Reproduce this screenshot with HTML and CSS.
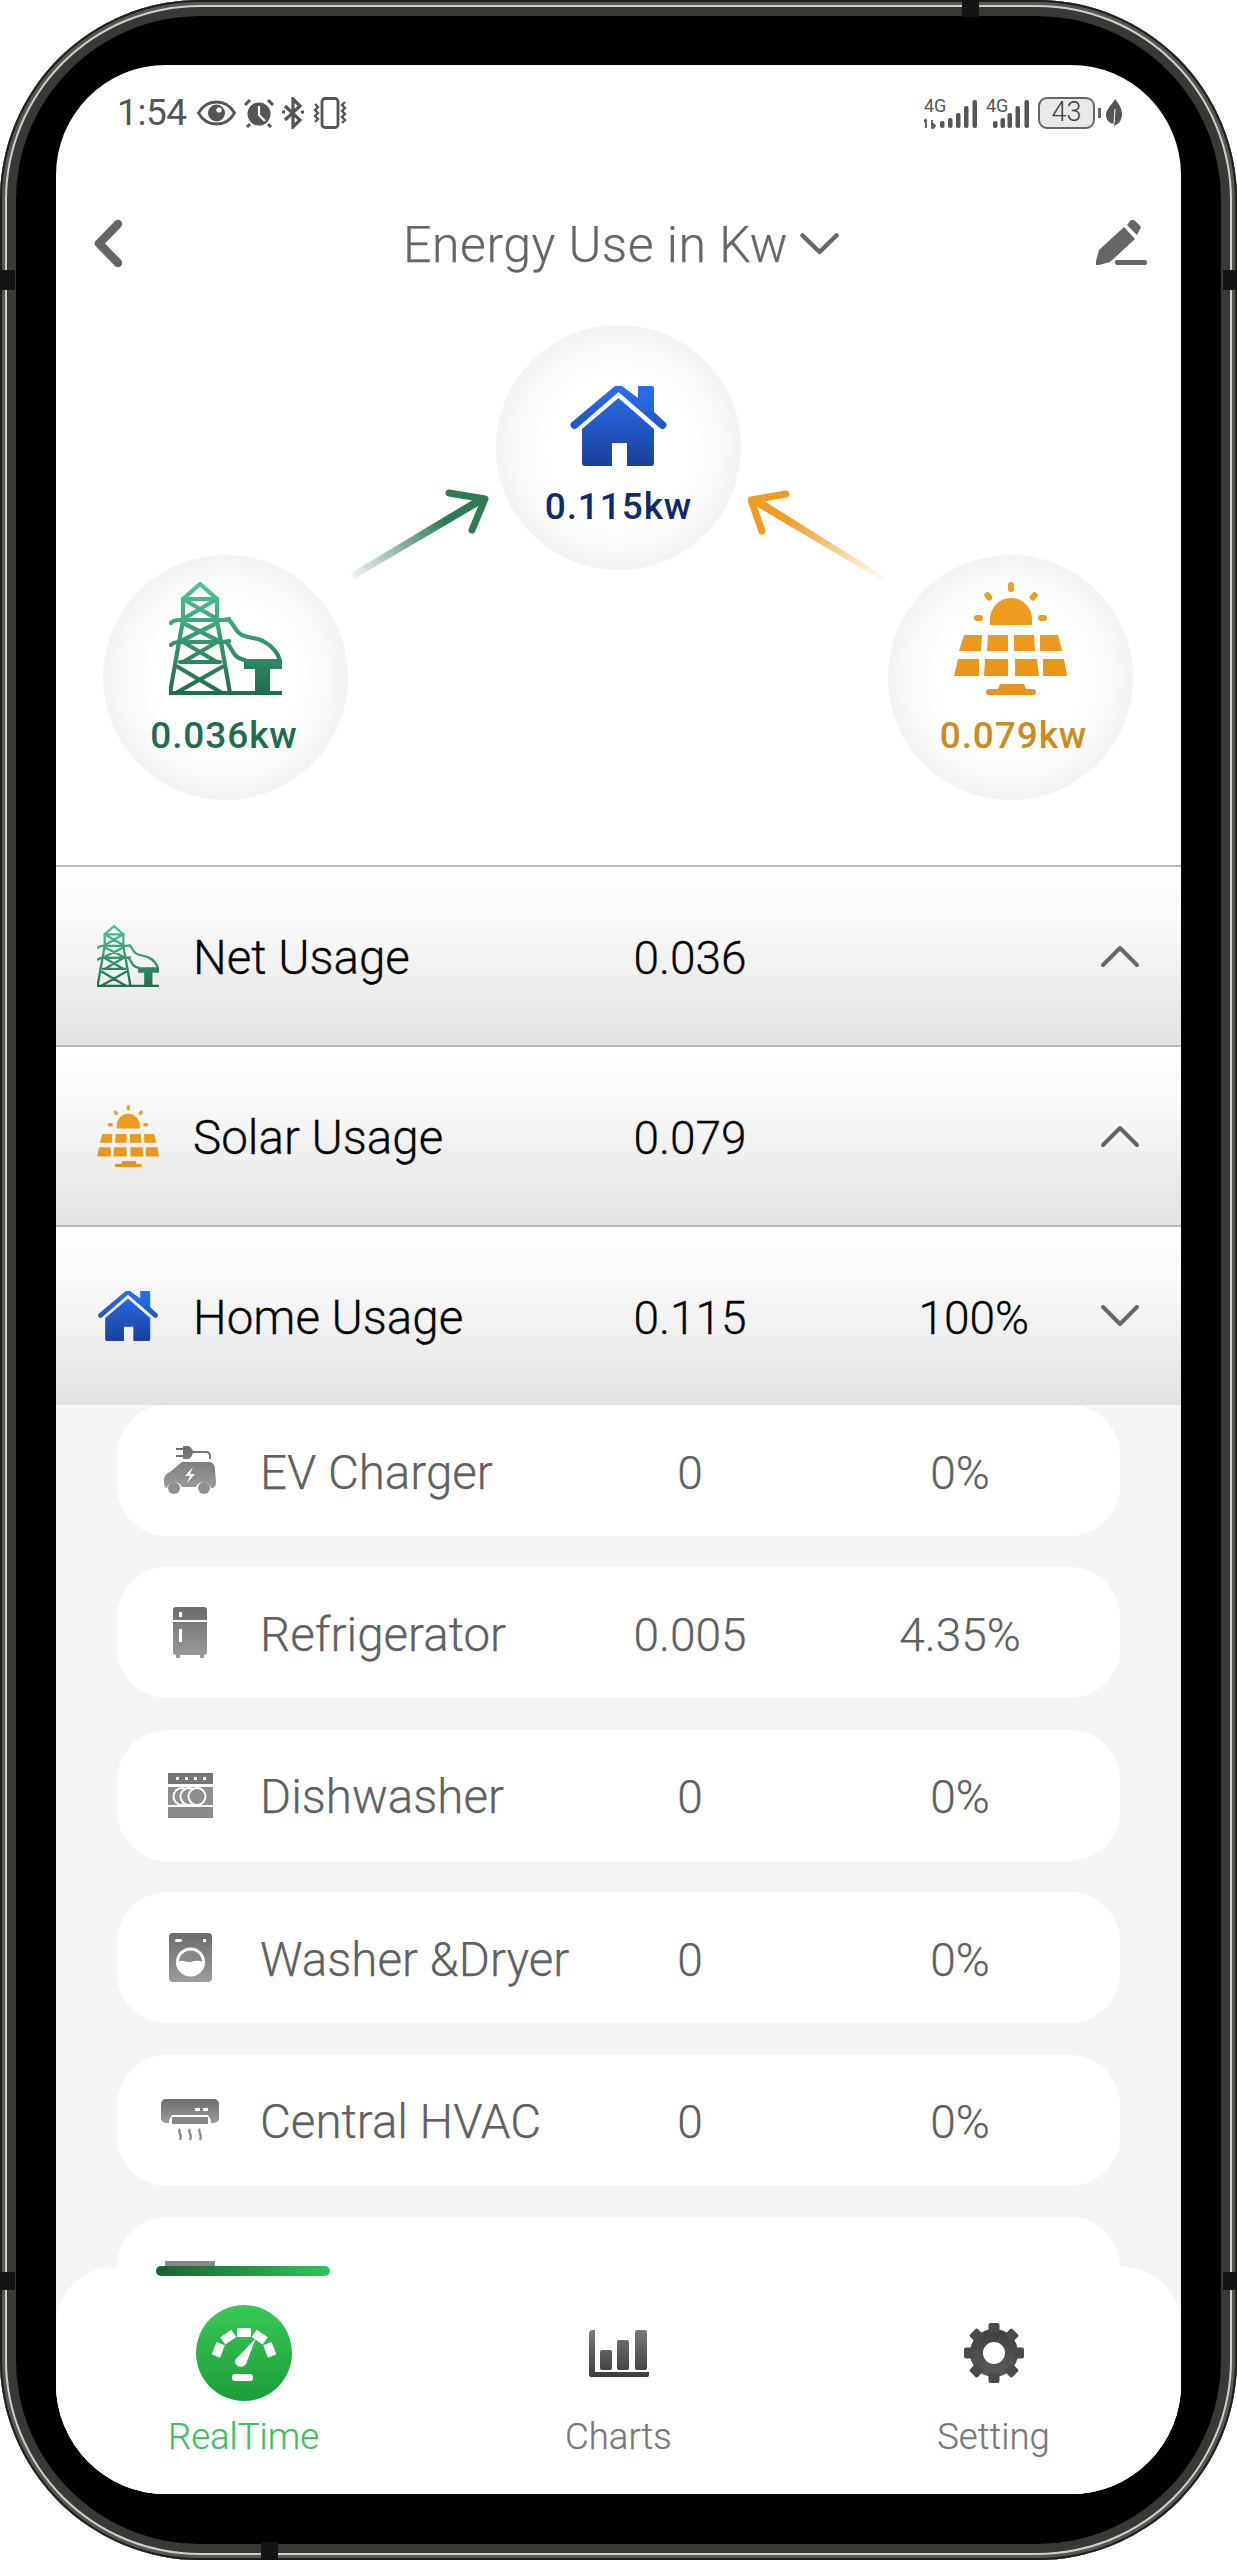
FILE: index.html
```html
<!DOCTYPE html>
<html lang="en">
<head>
<meta charset="utf-8">
<title>Energy Use</title>
<link rel="stylesheet" href="styles.css">
</head>
<body>
<svg class="defs" width="0" height="0" aria-hidden="true">
  <defs>
    <linearGradient id="gTower" gradientUnits="userSpaceOnUse" x1="0" y1="0" x2="0" y2="113"><stop offset="0" stop-color="#4fc596"/><stop offset="1" stop-color="#226b4c"/></linearGradient>
    <linearGradient id="gSolar" gradientUnits="userSpaceOnUse" x1="0" y1="0" x2="0" y2="113"><stop offset="0" stop-color="#ef9f22"/><stop offset="1" stop-color="#e8941c"/></linearGradient>
    <linearGradient id="gHome" gradientUnits="userSpaceOnUse" x1="0" y1="0" x2="0" y2="80"><stop offset="0" stop-color="#2870ee"/><stop offset="1" stop-color="#1a4099"/></linearGradient>
    <linearGradient id="gGray" x1="0" y1="0" x2="0" y2="1"><stop offset="0" stop-color="#6c6c6c"/><stop offset="1" stop-color="#9c9c9c"/></linearGradient>
    <linearGradient id="gDark" gradientUnits="userSpaceOnUse" x1="0" y1="0" x2="0" y2="60"><stop offset="0" stop-color="#3c3c3c"/><stop offset="1" stop-color="#5e5e5e"/></linearGradient>
    <linearGradient id="gChart" gradientUnits="userSpaceOnUse" x1="0" y1="0" x2="0" y2="47"><stop offset="0" stop-color="#7a7a7a"/><stop offset="1" stop-color="#3c3c3c"/></linearGradient>
    <linearGradient id="gGauge" x1="0" y1="0" x2="0" y2="1"><stop offset="0" stop-color="#38c855"/><stop offset="1" stop-color="#1d9e39"/></linearGradient>
    <linearGradient id="gArrowG" gradientUnits="userSpaceOnUse" x1="0" y1="85" x2="134" y2="8"><stop offset="0" stop-color="#2f7a57" stop-opacity=".08"/><stop offset=".7" stop-color="#2f7a57"/></linearGradient>
    <linearGradient id="gArrowO" gradientUnits="userSpaceOnUse" x1="130" y1="83" x2="0" y2="8"><stop offset="0" stop-color="#ee9c22" stop-opacity=".08"/><stop offset=".7" stop-color="#ee9c22"/></linearGradient>
    <symbol id="i-tower" viewBox="0 0 113 113">
      <g fill="none" stroke="url(#gTower)" stroke-width="4.200" stroke-linejoin="round" stroke-linecap="round">
        <path d="M31 2 14 17v22l-4 21-9 51M31 2l17 15v22l4 21 9 51"/>
        <path d="M14 17h34M14 17l34 20M48 17 14 37M14 41l34 17M48 41 14 58M14 60l34 20M48 60 14 80M14 60h38M11 80h40M9 85l44 26M53 85 7 111"/>
        <path d="M2 41c2-3 6-3 9-3h41c3 0 6 0 8-1M2 63c2-3 6-3 9-3h41c3 0 6 0 8-1"/>
        <path d="M60 38c4 3 5 9 10 13 5 5 16 4 24 8 9 5 15 11 17 20M58 61c4 4 5 9 9 13 3 3 5 3 9 4"/>
      </g>
      <path fill="url(#gTower)" d="M75 77h38v10H101v22H86V87H75zM0 109h113v4H0z"/>
    </symbol>
    <symbol id="i-solar" viewBox="0 0 113 113">
      <g fill="url(#gSolar)">
        <path d="M36 43V37a21 21 0 0 1 42 0v6z"/>
        <rect x="54" y="0" width="6" height="10" rx="3"/>
        <rect x="31" y="10" width="6" height="9" rx="3" transform="rotate(-40 34 14)"/>
        <rect x="77" y="10" width="6" height="9" rx="3" transform="rotate(40 80 14)"/>
        <rect x="20" y="33" width="9" height="6" rx="3"/>
        <rect x="84" y="33" width="9" height="6" rx="3"/>
        <path d="M10 53h18l-1 16H5zM34 53h20v16H33zM60 53h20l1 16H60zM86 53h18l4 16H86zM4 77h21v17H0zM31 77h23v17H30zM61 77h22l2 17H61zM89 77h21l3 17H89z"/>
        <path d="M44 107l2-5h24l2 5h7a3 3 0 0 1 0 6H35a3 3 0 0 1 0-6z"/>
      </g>
    </symbol>
    <symbol id="i-home" viewBox="0 0 99 80">
      <path fill="url(#gHome)" d="M69 0h14a2 2 0 0 1 2 2v24l11 10a3.500 3.500 0 0 1-5 6L49.500 6 8 42a3.500 3.500 0 0 1-5-6L46 0h7l16 12z"/>
      <path fill="url(#gHome)" d="M49.500 12 85 43v34a3 3 0 0 1-3 3H58V57H43v23H16a3 3 0 0 1-3-3V43z"/>
    </symbol>
  </defs>
</svg>

<div class="phone">
  <i class="notch notch-top"></i><i class="notch notch-bottom"></i><i class="notch notch-left-a"></i><i class="notch notch-left-b"></i><i class="notch notch-right-a"></i><i class="notch notch-right-b"></i>
  <main class="screen">
    <div class="status">
      <div class="status-left">
        <span class="clock">1:54</span>
        <svg width="39" height="26" viewBox="0 0 39 26"><path d="M1.500 13C6 5 12 2 19.500 2S33 5 37.500 13C33 21 27 24 19.500 24S6 21 1.500 13Z" fill="none" stroke="#555" stroke-width="2.800"/><circle cx="19.500" cy="13" r="8.500" fill="#555"/><circle cx="22" cy="10" r="2.600" fill="#fff"/></svg>
        <svg width="30" height="30" viewBox="0 0 30 30"><circle cx="15" cy="16" r="11.500" fill="#555"/><path d="M15 8v9l6 6" fill="none" stroke="#fff" stroke-width="2.200"/><path d="M1 7l5-5M29 7l-5-5M6 26l-3 3M24 26l3 3" stroke="#555" stroke-width="3"/></svg>
        <svg width="22" height="32" viewBox="0 0 22 32"><path d="M3 9l15 14-7 7V2l7 7L3 23" fill="none" stroke="#555" stroke-width="3.200"/><path d="M0 15h3M19 15h3" stroke="#555" stroke-width="3"/></svg>
        <svg width="36" height="32" viewBox="0 0 36 32"><rect x="10" y="1.500" width="16" height="29" rx="3" fill="none" stroke="#555" stroke-width="2.800"/><path d="M3 7l3 3-3 3 3 3-3 3 3 3-3 3M33 5l-3 3 3 3-3 3 3 3-3 3 3 3-3 3" fill="none" stroke="#555" stroke-width="2.400"/></svg>
      </div>
      <div class="status-right">
        <svg class="signal" width="53" height="36" viewBox="0 -4 53 36"><text x="0" y="15" class="sig-text">4G</text><path d="M2 23l0 8M2 22l-2 3M8 31v-8M8 32l3-3-3-3" fill="none" stroke="#555" stroke-width="1.800"/><g fill="#555"><rect x="16" y="24" width="4.500" height="7" rx="2"/><rect x="24" y="21" width="4.500" height="10" rx="2"/><rect x="32" y="16" width="4.500" height="15" rx="2"/><rect x="40" y="9" width="4.500" height="22" rx="2"/><rect x="48.500" y="3" width="4.500" height="28" rx="2"/></g></svg>
        <svg class="signal" width="43" height="36" viewBox="0 -4 43 36"><text x="0" y="15" class="sig-text">4G</text><g fill="#555"><rect x="7" y="24" width="4.500" height="7" rx="2"/><rect x="14.500" y="21" width="4.500" height="10" rx="2"/><rect x="21.500" y="16" width="4.500" height="15" rx="2"/><rect x="29.500" y="9" width="4.500" height="22" rx="2"/><rect x="38.500" y="3" width="4.500" height="28" rx="2"/></g></svg>
        <span class="battery">43</span>
        <i class="battery-nub"></i>
        <svg width="16" height="28" viewBox="0 0 16 28"><path d="M9 0c5 6 7 11 7 15 0 6-3 10-7 11l-1 2v-3C3 24 0 21 0 16 0 10 6 6 9 0Z" fill="#555"/><path d="M8 25 9 10" stroke="#fff" stroke-width="1"/></svg>
      </div>
    </div>

    <header class="topbar">
      <svg class="back" width="29" height="49" viewBox="0 0 29 49"><path d="M24 5 5 24.500 24 44" fill="none" stroke="#666" stroke-width="8.500" stroke-linecap="round" stroke-linejoin="round"/></svg>
      <div class="title-wrap">
        <h1 class="title">Energy Use in Kw</h1>
        <svg width="39" height="22" viewBox="0 0 39 22"><path d="M2.500 2.500 19.500 19 36.500 2.500" fill="none" stroke="#666" stroke-width="4.500" stroke-linecap="round" stroke-linejoin="round"/></svg>
      </div>
      <svg class="pencil" width="51" height="45" viewBox="0 0 51 45"><path fill="#666" d="M0 41 3 30 28 7l11 12L14 42 3 45a2.500 2.500 0 0 1-3-4ZM31 5l3-4a3.500 3.500 0 0 1 5 0l4.500 4a3.500 3.500 0 0 1 0 5L41 15Z"/><rect x="19" y="40" width="32" height="5" rx="2" fill="#666"/></svg>
    </header>

    <section class="flow">
      <svg class="arrow arrow-green" width="140" height="90" viewBox="0 0 140 90"><path d="M0 84 130 6 134 13 3 90Z" fill="url(#gArrowG)"/><path d="M98 4 134 10 121 41" fill="none" stroke="#2f7a57" stroke-width="7" stroke-linecap="round" stroke-linejoin="round"/></svg>
      <svg class="arrow arrow-orange" width="140" height="90" viewBox="0 0 140 90"><path d="M136 86 8 6 3 13 133 90Z" fill="url(#gArrowO)"/><path d="M38 4 3 10 14 41" fill="none" stroke="#ee9c22" stroke-width="7" stroke-linecap="round" stroke-linejoin="round"/></svg>

      <div class="node node-home">
        <svg class="node-icon-home"><use href="#i-home"/></svg>
        <span class="node-value home-text">0.115kw</span>
      </div>
      <div class="node node-grid">
        <svg class="node-icon"><use href="#i-tower"/></svg>
        <span class="node-value grid-text">0.036kw</span>
      </div>
      <div class="node node-solar">
        <svg class="node-icon"><use href="#i-solar"/></svg>
        <span class="node-value solar-text">0.079kw</span>
      </div>
    </section>

    <section class="usage">
      <div class="usage-row">
        <svg class="usage-icon"><use href="#i-tower"/></svg>
        <span class="label">Net Usage</span><span class="center">0.036</span><span></span>
        <svg class="caret" width="40" height="24" viewBox="0 0 40 24"><path d="M3 21 20 4 37 21" fill="none" stroke="#666" stroke-width="4" stroke-linecap="round" stroke-linejoin="round"/></svg>
      </div>
      <div class="usage-row">
        <svg class="usage-icon"><use href="#i-solar"/></svg>
        <span class="label">Solar Usage</span><span class="center">0.079</span><span></span>
        <svg class="caret" width="40" height="24" viewBox="0 0 40 24"><path d="M3 21 20 4 37 21" fill="none" stroke="#666" stroke-width="4" stroke-linecap="round" stroke-linejoin="round"/></svg>
      </div>
      <div class="usage-row">
        <svg class="usage-icon usage-icon-home"><use href="#i-home"/></svg>
        <span class="label">Home Usage</span><span class="center">0.115</span><span class="right">100%</span>
        <svg class="caret" width="40" height="24" viewBox="0 0 40 24"><path d="M3 3 20 20 37 3" fill="none" stroke="#666" stroke-width="4" stroke-linecap="round" stroke-linejoin="round"/></svg>
      </div>
    </section>

    <section class="devices">
      <div class="device">
        <svg class="device-icon" width="52" height="49" viewBox="0 0 52 49"><path fill="url(#gGray)" d="M12 2h7V0h5c2 0 4 3 5 5h13c3 0 5 2 5 5v3h-2v-3c0-2-1-3-3-3H29c-1 3-3 6-5 6h-5v-2h-7V9h7V4h-7zM18 16h27c4 0 6 3 6 8l1 12c0 3-1 5-3 6h-2a8 8 0 0 0-15-1H18a8 8 0 0 0-15 1H2c-1-1-2-2-2-5v-3c0-4 3-7 6-8z"/><circle cx="10" cy="42" r="6" fill="#8f8f8f"/><circle cx="40" cy="42" r="6" fill="#8f8f8f"/><path d="M29 21l-8 9h5l-3 7 8-9h-5z" fill="#fff"/></svg>
        <span class="label">EV Charger</span><span class="center">0</span><span class="center">0%</span>
      </div>
      <div class="device">
        <svg class="device-icon" width="34" height="51" viewBox="0 0 34 51"><path fill="url(#gGray)" d="M3 0h28a3 3 0 0 1 3 3v10H0V3a3 3 0 0 1 3-3ZM0 15h34v30a3 3 0 0 1-3 3v3h-4v-3H7v3H3v-3a3 3 0 0 1-3-3Z"/><rect x="6" y="5" width="3" height="5" fill="#fff"/><rect x="6" y="22" width="3" height="13" fill="#fff"/></svg>
        <span class="label">Refrigerator</span><span class="center">0.005</span><span class="center">4.35%</span>
      </div>
      <div class="device">
        <svg class="device-icon" width="45" height="45" viewBox="0 0 45 45"><rect x="0" y="0" width="45" height="11" fill="#757575"/><rect x="0" y="14" width="45" height="18" fill="#8e8e8e"/><rect x="0" y="34" width="45" height="11" fill="#8a8a8a"/><g fill="#fff"><rect x="8" y="4" width="3" height="3"/><rect x="17" y="4" width="3" height="3"/><rect x="26" y="4" width="3" height="3"/><rect x="35" y="4" width="3" height="3"/></g><g fill="#8e8e8e" stroke="#fff" stroke-width="2"><circle cx="14" cy="23.500" r="8.500"/><circle cx="21" cy="23.500" r="8.500"/><circle cx="29" cy="23.500" r="8.500"/></g></svg>
        <span class="label">Dishwasher</span><span class="center">0</span><span class="center">0%</span>
      </div>
      <div class="device">
        <svg class="device-icon" width="43" height="49" viewBox="0 0 43 49"><rect width="43" height="49" rx="4" fill="url(#gGray)"/><rect x="6" y="6" width="7" height="3" rx="1.500" fill="#fff"/><rect x="34" y="6" width="3" height="3" fill="#fff"/><circle cx="21.500" cy="29" r="13" fill="#888" stroke="#fff" stroke-width="3"/><path d="M9 29c5-3 8 1 12.500 0s8-2 12.500 0a12.500 12.500 0 0 1-25 0Z" fill="#fff"/></svg>
        <span class="label">Washer &amp;Dryer</span><span class="center">0</span><span class="center">0%</span>
      </div>
      <div class="device">
        <svg class="device-icon" width="58" height="43" viewBox="0 0 58 43"><path fill="url(#gGray)" d="M5 0h48a5 5 0 0 1 5 5v14a5 5 0 0 1-5 5h-3v-3l-3-5H11l-3 5v3H5a5 5 0 0 1-5-5V5a5 5 0 0 1 5-5Z"/><rect x="34" y="9" width="5" height="3" fill="#fff"/><rect x="42" y="9" width="5" height="3" fill="#fff"/><rect x="11" y="18" width="36" height="7" fill="#888"/><path d="M19 30c-3 3 3 5 0 11M29 30c-3 3 3 5 0 11M39 30c-3 3 3 5 0 11" fill="none" stroke="#888" stroke-width="2.200"/></svg>
        <span class="label">Central HVAC</span><span class="center">0</span><span class="center">0%</span>
      </div>
      <div class="device">
        <i class="device-stub"></i>
      </div>
    </section>

    <nav class="tabs">
      <i class="tab-bar"></i>
      <div class="tab tab-active">
        <svg class="gauge" width="96" height="96" viewBox="0 0 96 96"><circle cx="48" cy="48" r="48" fill="url(#gGauge)"/><path d="M19.800 51 24.700 38.700M26.800 35.900 37.800 28.400M41.100 27.400H54.900M58.200 28.400 69.200 35.900M71.300 38.700 76.200 51" fill="none" stroke="#fff" stroke-width="9"/><path d="M60 33 50 59a6 6 0 0 1-11-4Z" fill="#fff"/><rect x="36" y="69" width="21" height="7" rx="3" fill="#fff"/></svg>
        <span>RealTime</span>
      </div>
      <div class="tab">
        <svg class="tab-icon" width="60" height="47" viewBox="0 0 60 47"><path fill="url(#gChart)" d="M4 0h2v42h54v3a2 2 0 0 1-2 2H2a2 2 0 0 1-2-2V4a4 4 0 0 1 4-4Z"/><g fill="url(#gChart)"><rect x="11" y="20" width="12" height="20" rx="2"/><rect x="28" y="10" width="12" height="30" rx="2"/><rect x="46" y="0" width="12" height="40" rx="2"/></g></svg>
        <span>Charts</span>
      </div>
      <div class="tab">
        <svg class="tab-icon tab-icon-gear" width="60" height="60" viewBox="0 0 60 60"><circle cx="30" cy="30" r="17.500" fill="none" stroke="url(#gDark)" stroke-width="13"/><g fill="#4a4a4a"><rect x="24.500" y="0" width="11" height="10" rx="2"/><rect x="24.500" y="50" width="11" height="10" rx="2"/><rect x="0" y="24.500" width="10" height="11" rx="2"/><rect x="50" y="24.500" width="10" height="11" rx="2"/><rect x="24.500" y="0" width="11" height="10" rx="2" transform="rotate(45 30 30)"/><rect x="24.500" y="0" width="11" height="10" rx="2" transform="rotate(135 30 30)"/><rect x="24.500" y="0" width="11" height="10" rx="2" transform="rotate(225 30 30)"/><rect x="24.500" y="0" width="11" height="10" rx="2" transform="rotate(315 30 30)"/></g></svg>
        <span>Setting</span>
      </div>
    </nav>
  </main>
</div>
</body>
</html>
```

FILE: styles.css
```css
* { box-sizing: border-box; }

html, body { margin: 0; padding: 0; background: #fff; }

body { font-family: Roboto, "Liberation Sans", sans-serif; }

.defs { position: absolute; }

.phone {
  position: relative;
  width: 1237px;
  height: 2560px;
  padding: 65px 56px 66px;
  background: #000;
  border-radius: 200px;
  box-shadow:
    inset 0 0 0 2px #1f1f1d,
    inset 0 0 0 5px #565653,
    inset 0 0 0 7px #cfcfca,
    inset 0 0 0 16px #383836;
}

.notch { position: absolute; background: #141413; }
.notch-top { left: 962px; top: 0; width: 17px; height: 17px; }
.notch-bottom { left: 261px; top: 2542px; width: 17px; height: 18px; }
.notch-left-a { left: 0; top: 270px; width: 15px; height: 20px; }
.notch-left-b { left: 0; top: 2272px; width: 15px; height: 18px; }
.notch-right-a { right: 0; top: 270px; width: 14px; height: 20px; }
.notch-right-b { right: 0; top: 2272px; width: 14px; height: 18px; }

.screen {
  position: relative;
  display: flex;
  flex-direction: column;
  width: 1125px;
  height: 2429px;
  overflow: hidden;
  background: #fff;
  border-radius: 110px;
}

/* status bar */
.status {
  display: flex;
  justify-content: space-between;
  align-items: center;
  height: 95px;
  padding: 0 59px 0 61px;
  flex: none;
}
.status-left, .status-right { display: flex; align-items: center; }
.status-left { gap: 8px; color: #555; }
.status-right { gap: 9px; }
.clock { font-size: 37px; letter-spacing: -0.4px; margin-right: 2px; }
.signal { margin-top: -4px; }
.sig-text { font-family: Roboto, sans-serif; font-size: 18px; fill: #555; }
.battery {
  display: block;
  width: 57px;
  height: 32px;
  line-height: 27px;
  text-align: center;
  font-size: 27px;
  font-weight: 300;
  color: #444;
  background: #e9e9e9;
  border: 2.5px solid #666;
  border-radius: 9px;
}
.battery-nub { width: 3px; height: 10px; margin-left: -6px; margin-right: -4px; background: #666; }

/* header */
.topbar {
  position: relative;
  display: flex;
  justify-content: center;
  align-items: center;
  height: 168px;
  flex: none;
}
.back { position: absolute; left: 38px; top: 59px; }
.pencil { position: absolute; right: 34px; top: 60px; }
.title-wrap { display: flex; align-items: center; gap: 12px; margin-left: 5px; }
.title { margin: 2px 0 0; font-size: 50px; letter-spacing: .5px; font-weight: 300; color: #666; line-height: 1.2; -webkit-text-stroke: .25px currentColor; }

/* flow diagram */
.flow { position: relative; height: 537px; flex: none; }
.node {
  position: absolute;
  display: flex;
  flex-direction: column;
  align-items: center;
  width: 245px;
  height: 245px;
  border-radius: 50%;
  background: radial-gradient(circle closest-side, #fff 55%, #fbfbfb 80%, #f3f3f3 100%);
}
.node-home { left: 440px; top: -3px; padding-top: 61px; }
.node-grid { left: 47px; top: 227px; padding-top: 27px; }
.node-solar { left: 832px; top: 227px; padding-top: 27px; }
.node-icon { width: 113px; height: 113px; }
.node-icon-home { width: 99px; height: 80px; }
.node-value { margin-top: 21px; font-size: 37px; font-weight: 500; line-height: 40px; letter-spacing: .9px; }
.home-text { color: #12296b; }
.grid-text { color: #236b50; margin-left: -3px; }
.solar-text { color: #cc8a22; margin-left: 6px; }
.arrow { position: absolute; }
.arrow-green { left: 295px; top: 161px; }
.arrow-orange { left: 692px; top: 162px; }

/* usage rows */
.usage { flex: none; }
.usage-row {
  display: grid;
  grid-template-columns: 137px 387px 220px 229px 1fr;
  align-items: center;
  height: 180px;
  padding: 0 41px 0 0;
  font-size: 46px;
  font-weight: 300;
  color: #000;
  -webkit-text-stroke: .3px currentColor;
  background: linear-gradient(#fff 0, #fafafa 30%, #e2e2e2 100%);
  border-top: 2px solid #b9b9b9;
}
.usage-row span, .device span { padding-top: 4px; }
.label { font-size: 47.5px; }
.usage-icon { width: 62px; height: 62px; margin-left: 41px; }
.usage-icon-home { height: 50px; }
.center { text-align: center; }
.right { text-align: right; }
.caret { justify-self: end; }

/* device list */
.devices {
  flex: 1;
  display: flex;
  flex-direction: column;
  gap: 31.4px;
  padding: 0 61px;
  background: #f5f5f5;
}
.device {
  display: grid;
  grid-template-columns: 143px 320px 220px 320px;
  align-items: center;
  flex: none;
  height: 131px;
  font-size: 46px;
  font-weight: 300;
  color: #606060;
  -webkit-text-stroke: .25px currentColor;
  background: #fff;
  border-radius: 50px;
}
.device-icon { justify-self: center; margin-left: 3px; }
.device-stub { display: block; grid-column: 1; align-self: start; margin: 44px 0 0 48px; width: 50px; height: 6px; background: #888; }

/* bottom tabs */
.tabs {
  position: absolute;
  left: 0;
  right: 0;
  bottom: 0;
  display: grid;
  grid-template-columns: repeat(3, 1fr);
  height: 227px;
  background: #fff;
  border-radius: 58px 58px 0 0;
}
.tab-bar {
  position: absolute;
  left: 100px;
  top: -1px;
  width: 174px;
  height: 10px;
  border-radius: 5px;
  background: linear-gradient(90deg, #176231, #36c25b);
}
.tab {
  display: flex;
  flex-direction: column;
  align-items: center;
  color: #777;
  font-size: 36.5px;
  line-height: 42px;
  font-weight: 300;
  -webkit-text-stroke: .25px currentColor;
}
.tab span { position: absolute; top: 149px; }
.gauge { margin-top: 38px; }
.tab-icon { margin-top: 63px; }
.tab-icon-gear { margin-top: 56px; }
.tab-active { color: #3fbe62; }
```
